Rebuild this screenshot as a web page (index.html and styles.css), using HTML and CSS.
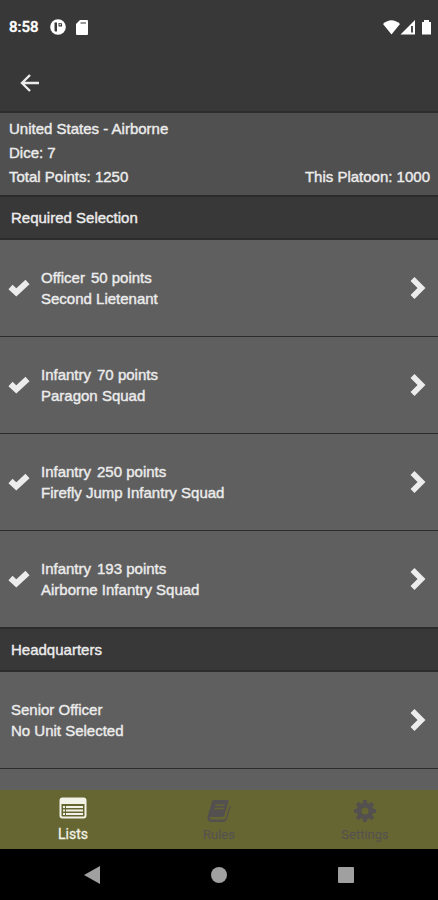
FILE: index.html
```
<!DOCTYPE html>
<html lang="en">
<head>
    <meta charset="UTF-8">
    <meta name="viewport" content="width=device-width, initial-scale=1.0">
    <title>Platoon</title>
    <link rel="stylesheet" href="styles.css">
</head>
<body>
<svg class="sprite" aria-hidden="true">
    <symbol id="check" viewBox="0 0 22 18">
        <path d="M2.500 8L8.300 13.500L19.500 3" fill="none" stroke="currentColor" stroke-width="6"/>
    </symbol>
    <symbol id="chevron" viewBox="0 0 16 24">
        <path d="M2.500 3L11.500 12L2.500 21" fill="none" stroke="currentColor" stroke-width="5.600"/>
    </symbol>
</svg>

<div class="status-bar">
    <span class="clock">8:58</span>
    <svg class="status-icon" width="16" height="16" viewBox="0 0 16 16">
        <circle cx="8" cy="8" r="7.800" fill="#fff"/>
        <path d="M4.500 3.500H7V12.500H5.500Q4.500 12.500 4.500 11zM8.500 4H11.500Q12.500 5.500 12 7.500H8.500z" fill="#383838"/>
        <path d="M9.500 4.800H10.800V6.200H9.500z" fill="#fff"/>
    </svg>
    <svg class="status-icon" width="12" height="15" viewBox="0 0 12 15">
        <path d="M4 0H11Q12 0 12 1V14Q12 15 11 15H1Q0 15 0 14V4z" fill="#fff"/>
        <path d="M4.500 3H10" stroke="#777" stroke-width="1.500"/>
    </svg>
    <svg class="signals" width="50" height="15" viewBox="0 0 50 15">
        <path d="M0 4Q8.500 -3.500 17 4L8.500 14.500z" fill="#fff"/>
        <path d="M32 0V14.500H17.500z" fill="#fff"/>
        <path d="M29 6V12.500" stroke="#383838" stroke-width="1.800"/>
        <path d="M39 2H41V0H46V2H48V14.500H39z" fill="#fff"/>
    </svg>
</div>

<header class="app-bar">
    <button class="back" aria-label="Back">
        <svg width="20" height="18" viewBox="0 0 20 18">
            <path d="M19 9H2.500M10 1L2 9L10 17" fill="none" stroke="currentColor" stroke-width="2.400"/>
        </svg>
    </button>
</header>

<section class="summary">
    <div>United States - Airborne</div>
    <div>Dice: 7</div>
    <div class="summary-points">
        <span>Total Points: 1250</span>
        <span>This Platoon: 1000</span>
    </div>
</section>

<main class="unit-list">
    <h2 class="section-title">Required Selection</h2>
    <button class="unit">
        <svg class="check"><use href="#check"/></svg>
        <span class="unit-text">
            <span class="unit-type"><span>Officer</span><span>50 points</span></span>
            <span>Second Lietenant</span>
        </span>
        <svg class="chevron"><use href="#chevron"/></svg>
    </button>
    <button class="unit">
        <svg class="check"><use href="#check"/></svg>
        <span class="unit-text">
            <span class="unit-type"><span>Infantry</span><span>70 points</span></span>
            <span>Paragon Squad</span>
        </span>
        <svg class="chevron"><use href="#chevron"/></svg>
    </button>
    <button class="unit">
        <svg class="check"><use href="#check"/></svg>
        <span class="unit-text">
            <span class="unit-type"><span>Infantry</span><span>250 points</span></span>
            <span>Firefly Jump Infantry Squad</span>
        </span>
        <svg class="chevron"><use href="#chevron"/></svg>
    </button>
    <button class="unit">
        <svg class="check"><use href="#check"/></svg>
        <span class="unit-text">
            <span class="unit-type"><span>Infantry</span><span>193 points</span></span>
            <span>Airborne Infantry Squad</span>
        </span>
        <svg class="chevron"><use href="#chevron"/></svg>
    </button>

    <h2 class="section-title">Headquarters</h2>
    <button class="unit unit-empty">
        <span class="unit-text">
            <span>Senior Officer</span>
            <span>No Unit Selected</span>
        </span>
        <svg class="chevron"><use href="#chevron"/></svg>
    </button>
</main>

<nav class="tabs">
    <a href="#lists" class="tab active">
        <svg width="28" height="22" viewBox="0 0 28 22">
            <rect x="1.500" y="1.500" width="25" height="19" rx="2" fill="none" stroke="currentColor" stroke-width="2"/>
            <path d="M1 2H27V7H1z" fill="currentColor"/>
            <path d="M4 10H6M4 13.500H6M4 17H6M7 10H24M7 13.500H24M7 17H24" stroke="currentColor" stroke-width="1.800"/>
        </svg>
        <span>Lists</span>
    </a>
    <a href="#rules" class="tab">
        <svg width="24" height="22" viewBox="0 0 24 22">
            <path d="M7 0H20Q22 0 21.500 2L17.500 15Q17 17 15 17H4Q2.500 17 2.800 18.500Q3 19.500 4.500 19.500H17Q18.500 19.500 19 18L23 5Q24 6 23.500 7.500L19.800 19.500Q19 22 16.500 22H4Q0 21.500 0.500 17L4.800 2Q5.300 0 7 0z" fill="currentColor"/>
            <path d="M8.500 5H17.500M7.500 8.500H16.500" stroke="#666633" stroke-width="1.500"/>
        </svg>
        <span>Rules</span>
    </a>
    <a href="#settings" class="tab">
        <svg width="22" height="22" viewBox="0 0 22 22">
            <circle cx="11" cy="11" r="6" fill="none" stroke="currentColor" stroke-width="5"/>
            <path d="M11 0V4M11 18V22M0 11H4M18 11H22M3.200 3.200L6 6M16 16L18.800 18.800M3.200 18.800L6 16M16 6L18.800 3.200" stroke="currentColor" stroke-width="4"/>
        </svg>
        <span>Settings</span>
    </a>
</nav>

<div class="system-nav">
    <button aria-label="System back">
        <svg width="18" height="20" viewBox="0 0 18 20"><path d="M1 10L17 1V19z" fill="currentColor"/></svg>
    </button>
    <button aria-label="Home">
        <svg width="18" height="18" viewBox="0 0 18 18"><circle cx="9" cy="9" r="8" fill="currentColor"/></svg>
    </button>
    <button aria-label="Recent apps">
        <svg width="18" height="18" viewBox="0 0 18 18"><rect x="1" y="1" width="16" height="16" rx="1" fill="currentColor"/></svg>
    </button>
</div>
</body>
</html>
```
FILE: styles.css
```
:root {
    --bar: #383838;
    --summary: #505050;
    --row: #5f5f5f;
    --line: #2c2c2c;
    --text: #ececec;
    --olive: #666633;
    --muted: #54504f;
}

* {
    box-sizing: border-box;
}

body {
    margin: 0;
    height: 100vh;
    display: flex;
    flex-direction: column;
    overflow: hidden;
    background: var(--row);
    color: var(--text);
    font-family: "Liberation Sans", Arial, sans-serif;
    font-size: 15px;
    -webkit-text-stroke: 0.4px currentColor;
}

button {
    margin: 0;
    padding: 0;
    border: none;
    background: none;
    color: inherit;
    font: inherit;
    cursor: pointer;
}

svg {
    display: block;
    flex: none;
}

.sprite {
    display: none;
}

/* --- top --- */
.status-bar {
    display: flex;
    align-items: center;
    height: 54px;
    padding: 0 5px 0 9px;
    background: var(--bar);
    color: #fff;
}

.clock {
    margin-right: 11px;
    font-family: Roboto, sans-serif;
    font-weight: 500;
}

.status-icon {
    margin-right: 10px;
}

.signals {
    margin-left: auto;
}

.app-bar {
    display: flex;
    align-items: center;
    height: 59px;
    padding: 0 20px;
    background: var(--bar);
    border-bottom: 2px solid var(--line);
}

.summary {
    padding: 4px 8px 6px 9px;
    border-bottom: 1px solid var(--line);
    line-height: 24px;
    background: var(--summary);
}

.summary-points {
    display: flex;
    justify-content: space-between;
}

/* --- list --- */
.unit-list {
    flex: 1;
    min-height: 0;
    overflow: hidden;
}

.section-title {
    margin: 0;
    padding: 10px 11px;
    border-top: 1px solid var(--line);
    border-bottom: 2px solid var(--line);
    background: var(--bar);
    font-size: 15px;
    font-weight: 400;
    line-height: 21px;
}

.unit {
    display: flex;
    align-items: center;
    gap: 11px;
    width: 100%;
    padding: 27px 12px 27px 8px;
    border-bottom: 1px solid var(--line);
    line-height: 21px;
    text-align: left;
}

.unit-empty {
    padding-left: 11px;
}

.unit-text {
    flex: 1;
    display: flex;
    flex-direction: column;
}

.unit-type {
    display: flex;
    gap: 6px;
}

.check {
    width: 22px;
    height: 18px;
}

.chevron {
    width: 16px;
    height: 24px;
}

/* --- bottom --- */
.tabs {
    display: flex;
    height: 59px;
    background: var(--olive);
}

.tab {
    flex: 1;
    display: flex;
    flex-direction: column;
    align-items: center;
    gap: 5px;
    padding-top: 10px;
    color: var(--muted);
    font-family: Roboto, sans-serif;
    font-size: 13px;
    line-height: 16px;
    text-decoration: none;
    -webkit-text-stroke: 0;
}

.active {
    gap: 7px;
    padding-top: 7px;
    color: #f2f2e6;
    font-size: 14px;
    -webkit-text-stroke: 0.3px currentColor;
}

.system-nav {
    display: flex;
    justify-content: space-around;
    align-items: center;
    height: 51px;
    padding: 0 28px;
    background: #000;
    color: #a0a0a0;
}
```
